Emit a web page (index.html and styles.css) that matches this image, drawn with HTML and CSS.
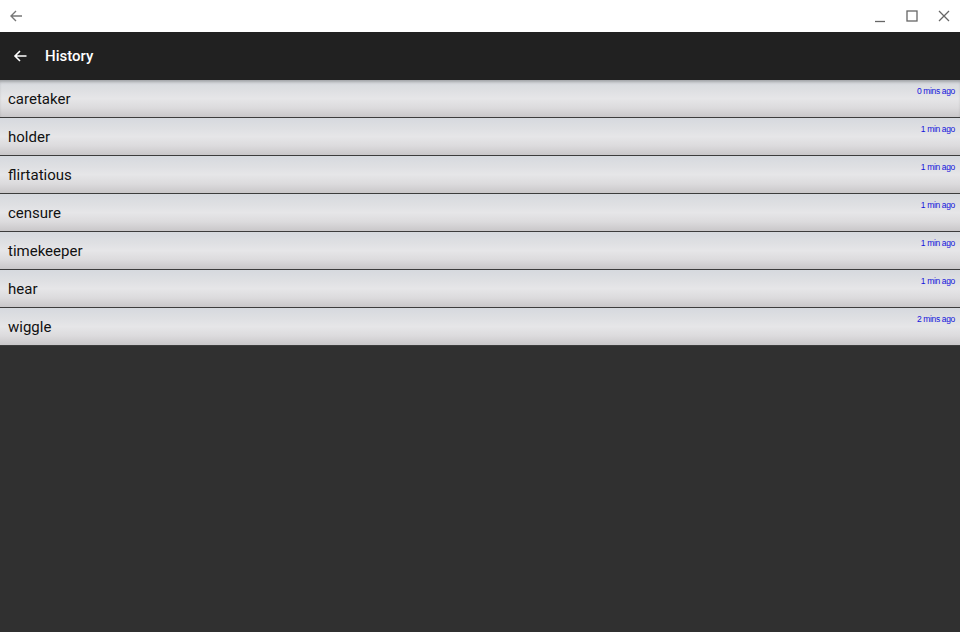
FILE: index.html
```html
<!DOCTYPE html>
<html>
<head>
<meta charset="utf-8">
<link rel="stylesheet" href="styles.css">
</head>
<body>
<div class="titlebar">
  <svg class="tb-back" width="14" height="14" viewBox="0 0 14 14"><path d="M13 7H2M7 2L2 7l5 5" fill="none" stroke="#777" stroke-width="1.4"/></svg>
  <div class="spacer"></div>
  <svg class="tb-btn" width="14" height="14" viewBox="0 0 14 14"><path d="M2 12.5h10" stroke="#666" stroke-width="1.3"/></svg>
  <svg class="tb-btn" width="14" height="14" viewBox="0 0 14 14"><rect x="2" y="2" width="10" height="10" fill="none" stroke="#666" stroke-width="1.3"/></svg>
  <svg class="tb-btn" width="14" height="14" viewBox="0 0 14 14"><path d="M2 2l10 10M12 2L2 12" stroke="#666" stroke-width="1.3"/></svg>
</div>
<div class="toolbar">
  <svg class="tl-back" width="16" height="16" viewBox="0 0 16 16"><path d="M14.5 8H3M8 3L3 8l5 5" fill="none" stroke="#fff" stroke-width="1.6"/></svg>
  <span class="title">History</span>
</div>
<div class="list">
  <div class="row"><span class="word">caretaker</span><span class="time">0 mins ago</span></div>
  <div class="row"><span class="word">holder</span><span class="time">1 min ago</span></div>
  <div class="row"><span class="word">flirtatious</span><span class="time">1 min ago</span></div>
  <div class="row"><span class="word">censure</span><span class="time">1 min ago</span></div>
  <div class="row"><span class="word">timekeeper</span><span class="time">1 min ago</span></div>
  <div class="row"><span class="word">hear</span><span class="time">1 min ago</span></div>
  <div class="row"><span class="word">wiggle</span><span class="time">2 mins ago</span></div>
</div>
</body>
</html>
```
FILE: styles.css
```css
html, body {
  margin: 0;
  padding: 0;
  background: #303030;
  font-family: Roboto, "Liberation Sans", sans-serif;
  height: 100%;
  overflow: hidden;
}
.titlebar {
  height: 32px;
  background: #fff;
  display: flex;
  align-items: center;
  padding: 0 9px;
}
.spacer { flex: 1; }
.tb-btn { margin-left: 18px; }
.toolbar {
  height: 48px;
  background: #212121;
  display: flex;
  align-items: center;
  padding-left: 12px;
}
.title {
  color: #fff;
  font-size: 15px;
  font-weight: 500;
  margin-left: 17px;
}
.list {
  display: flex;
  flex-direction: column;
}
.row {
  position: relative;
  height: 37px;
  border-bottom: 1px solid #3c3c3c;
  background: linear-gradient(to bottom, #d6d9de 0%, #dfe0e3 30%, #e6e6e8 50%, #dcdbdd 75%, #c9c7c9 100%);
  display: flex;
  align-items: center;
  padding-left: 8px;
}
.row:first-child {
  box-shadow: inset 0 3px 3px -1px rgba(0,0,0,0.25);
}
.word {
  font-size: 15px;
  color: #111;
  margin-top: 1px;
}
.time {
  position: absolute;
  right: 5px;
  top: 6px;
  font-family: "Liberation Sans", Arial, sans-serif;
  font-size: 8.5px;
  letter-spacing: -0.35px;
  color: #1414dc;
}
```
